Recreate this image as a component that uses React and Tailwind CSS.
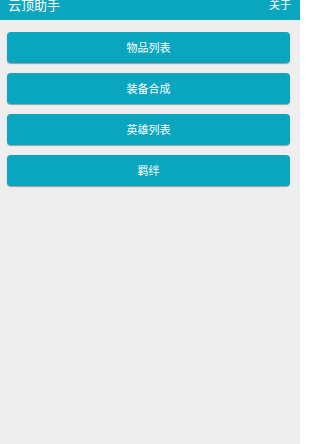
const items = ["物品列表", "装备合成", "英雄列表", "羁绊"];

export default function App() {
  return (
    <div
      className="w-[300px] h-[444px] bg-[#eeeeee] overflow-hidden"
      style={{ fontFamily: '"Noto Sans CJK SC", "Liberation Sans", sans-serif' }}
    >
      <header className="h-[20px] bg-[#0aa6bf] flex justify-between items-start pl-[8px] pr-[9px] text-white">
        <span className="text-[13px] leading-[13px] -mt-[2px]">云顶助手</span>
        <span className="text-[11px] leading-[11px] -mt-[1px]">关于</span>
      </header>

      <div className="flex flex-col gap-[10px] pt-[12px] pl-[7px] pr-[10px]">
        {items.map((name) => (
          <button
            key={name}
            className="h-[31px] w-full rounded-[4px] bg-[#0aa6bf] text-white text-[11px] shadow-[0_1px_1px_rgba(0,0,0,0.35)]"
          >
            {name}
          </button>
        ))}
      </div>
    </div>
  );
}
